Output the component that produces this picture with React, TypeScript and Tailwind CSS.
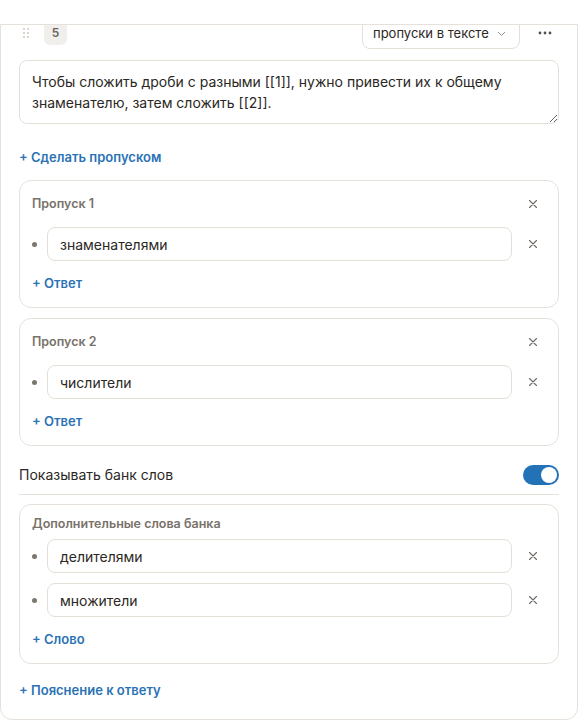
import React, { useState } from 'react';

const font = { fontFamily: 'Inter, "Noto Sans", sans-serif' };

function CloseIcon() {
  return (
    <svg width="12" height="12" viewBox="0 0 12 12" fill="none" stroke="#6f6a64" strokeWidth="1.1" strokeLinecap="round">
      <path d="M2.5 2.5l7 7M9.5 2.5l-7 7" />
    </svg>
  );
}

function IconButton() {
  return (
    <button type="button" className="flex h-6 w-6 shrink-0 items-center justify-center rounded-md hover:bg-[#f3f1ed]">
      <CloseIcon />
    </button>
  );
}

function AnswerRow({ value }: { value: string }) {
  return (
    <div className="flex items-center">
      <span className="mr-[10px] h-[5px] w-[5px] shrink-0 rounded-full bg-[#7d776f]" />
      <input
        defaultValue={value}
        className="mr-[9px] h-[34px] min-w-0 flex-1 rounded-lg border border-[#e4dfd7] bg-white px-3 text-[14px] text-[#2b2824] outline-none"
      />
      <IconButton />
    </div>
  );
}

function AddLink({ label, className = '' }: { label: string; className?: string }) {
  return (
    <button type="button" className={`block text-left text-[13px] font-semibold leading-[18px] text-[#2a72b5] ${className}`}>
      + {label}
    </button>
  );
}

function GapCard({ title, answers }: { title: string; answers: string[] }) {
  return (
    <div className="rounded-xl border border-[#e6e1da] pb-[15px] pl-3 pr-[13px] pt-[11px]">
      <div className="flex h-6 items-center justify-between">
        <span className="text-[12.5px] font-semibold text-[#78726a]">{title}</span>
        <IconButton />
      </div>
      <div className="mt-[11px] space-y-2.5">
        {answers.map((a) => (
          <AnswerRow key={a} value={a} />
        ))}
      </div>
      <AddLink label="Ответ" className="mt-[13px]" />
    </div>
  );
}

export default function App() {
  const [bank, setBank] = useState(true);

  return (
    <div className="h-[721px] w-[578px] bg-white pt-6" style={font}>
      <div className="h-[696px] overflow-hidden rounded-b-xl border border-[#e6e1da]">
        <div className="-mt-[12px] px-[18px]">
          {/* header */}
          <div className="flex h-9 items-center">
            <span className="ml-1 mt-1 grid grid-cols-2 gap-x-[2px] gap-y-[2px]">
              {[0, 1, 2, 3, 4, 5].map((i) => (
                <span key={i} className="h-[2px] w-[2px] rounded-full bg-[#cdc8c0]" />
              ))}
            </span>
            <span className="ml-[15px] mt-1 flex h-6 w-[23px] items-center justify-center rounded-md bg-[#f1efeb] text-[12px] font-semibold text-[#6b655e]">
              5
            </span>
            <button
              type="button"
              className="ml-auto flex h-9 w-[158px] items-center rounded-lg border border-[#e4dfd7] pl-[10px] pr-3 pt-1 text-[13px] leading-4 text-[#2b2824]"
            >
              пропуски в тексте
              <svg className="ml-auto" width="11" height="11" viewBox="0 0 11 11" fill="none" stroke="#9a948c" strokeWidth="1">
                <path d="M2 4l3.5 3.5L9 4" />
              </svg>
            </button>
            <button type="button" className="ml-[13px] mr-[2px] mt-1 flex h-6 w-6 items-center justify-center">
              <svg width="14" height="4" viewBox="0 0 14 4" fill="#55504a">
                <circle cx="2" cy="2" r="1.4" />
                <circle cx="7" cy="2" r="1.4" />
                <circle cx="12" cy="2" r="1.4" />
              </svg>
            </button>
          </div>

          {/* question text */}
          <textarea
            rows={2}
            defaultValue="Чтобы сложить дроби с разными [[1]], нужно привести их к общему знаменателю, затем сложить [[2]]."
            className="mt-[11px] block h-16 w-full resize-y rounded-lg border border-[#e4dfd7] px-3 py-[10px] text-[14px] leading-[21px] text-[#2b2824] outline-none"
          />

          <AddLink label="Сделать пропуском" className="mt-6" />

          <div className="mt-[14px] space-y-2.5">
            <GapCard title="Пропуск 1" answers={['знаменателями']} />
            <GapCard title="Пропуск 2" answers={['числители']} />
          </div>

          {/* word bank toggle */}
          <div className="mt-[18px] flex items-center justify-between border-b border-[#e6e1da] pb-[9px]">
            <span className="text-[14px] text-[#2b2824]">Показывать банк слов</span>
            <button
              type="button"
              onClick={() => setBank(!bank)}
              className={`flex h-5 w-9 items-center rounded-full p-[2px] ${bank ? 'justify-end bg-[#2371b6]' : 'justify-start bg-[#d6d1ca]'}`}
            >
              <span className="h-4 w-4 rounded-full bg-white" />
            </button>
          </div>

          {/* extra bank words */}
          <div className="mt-[9px] rounded-xl border border-[#e6e1da] pb-[15px] pl-3 pr-[13px] pt-[11px]">
            <div className="text-[12.5px] font-semibold leading-4 text-[#78726a]">Дополнительные слова банка</div>
            <div className="mt-[7px] space-y-2.5">
              <AnswerRow value="делителями" />
              <AnswerRow value="множители" />
            </div>
            <AddLink label="Слово" className="mt-[13px]" />
          </div>

          <AddLink label="Пояснение к ответу" className="mt-[17px]" />
        </div>
      </div>
    </div>
  );
}
